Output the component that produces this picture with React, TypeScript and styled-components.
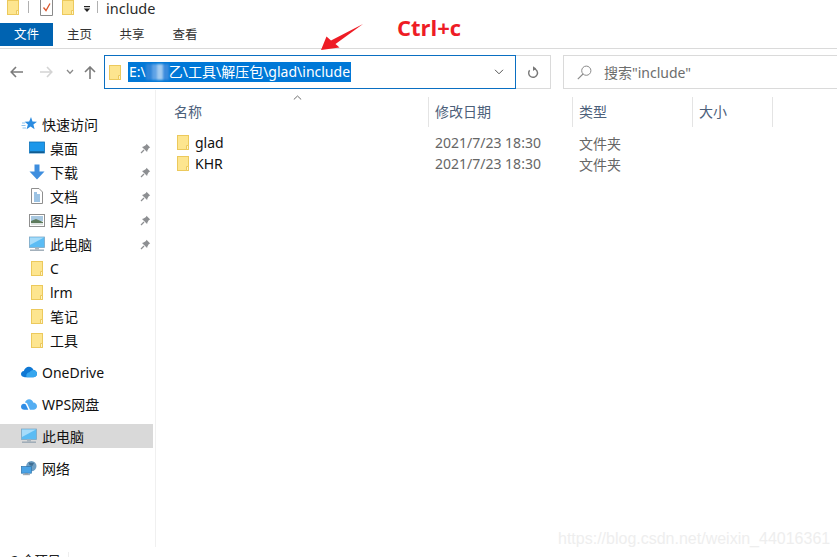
import React from "react";
import styled, { createGlobalStyle } from "styled-components";

const Global = createGlobalStyle`
  html, body { margin: 0; padding: 0; background: #fff; overflow: hidden; }
  #root { width: 837px; height: 557px; }
  * { box-sizing: border-box; }
`;

const FONT = `"Noto Sans", "Noto Sans CJK SC", sans-serif`;

const Window = styled.div`
  position: relative;
  width: 837px;
  height: 557px;
  overflow: hidden;
  background: #fff;
  font-family: ${FONT};
  color: #1a1a1a;
  display: flex;
  flex-direction: column;
`;

const TitleBar = styled.div`
  height: 23px;
  display: flex;
  align-items: flex-start;
  padding-left: 7px;
  flex: none;
`;
const TitleSep = styled.span<{ $ml: number }>`
  width: 1px;
  height: 12px;
  background: #b0b0b0;
  margin: 1px 0 0 ${(p) => p.$ml}px;
  flex: none;
`;
const TitleIcon = styled.span<{ $ml: number }>`
  margin-left: ${(p) => p.$ml}px;
  display: flex;
  flex: none;
`;
const TitleText = styled.span`
  margin: 0 0 0 8px;
  font-size: 14.5px;
  line-height: 16px;
  color: #2a2a2a;
`;

const Tabs = styled.div`
  height: 26px;
  flex: none;
  display: flex;
  align-items: flex-start;
  border-bottom: 1px solid #dadada;
`;
const FileTab = styled.div`
  width: 53px;
  height: 23px;
  background: #0063b1;
  color: #fff;
  font-size: 12.5px;
  line-height: 23px;
  text-align: center;
`;
const Tab = styled.div<{ $w: number }>`
  width: ${(p) => p.$w}px;
  height: 23px;
  font-size: 12.5px;
  line-height: 23px;
  text-align: center;
  color: #333;
`;

const NavRow = styled.div`
  height: 41px;
  flex: none;
  display: flex;
  align-items: flex-start;
  padding-top: 6px;
`;
const NavButtons = styled.div`
  width: 104px;
  height: 34px;
  flex: none;
  display: flex;
  align-items: center;
  padding-left: 10px;
`;
const NavIcon = styled.span<{ $ml?: number }>`
  margin-left: ${(p) => p.$ml ?? 0}px;
  display: flex;
  flex: none;
`;
const AddressBox = styled.div`
  width: 412px;
  height: 34px;
  flex: none;
  border: 1px solid #0a6fc2;
  display: flex;
  align-items: center;
  padding: 0 11px 0 4px;
`;
const Selection = styled.div`
  margin-left: 7px;
  height: 20px;
  width: 223px;
  background: #0078d7;
  color: #fff;
  font-size: 14px;
  line-height: 20px;
  padding-left: 1px;
  white-space: nowrap;
  overflow: hidden;
`;
const Blur = styled.span`
  display: inline-block;
  vertical-align: top;
  margin-top: 2px;
  width: 23px;
  height: 16px;
  background: linear-gradient(90deg, #2f84d8 0 25%, #5fa3e6 25% 50%, #a3cbf0 50% 72%, #3b8bdc 72%);
  filter: blur(1px);
`;
const Spacer = styled.div`
  flex: 1;
`;
const RefreshBox = styled.div`
  width: 35px;
  height: 34px;
  flex: none;
  border: 1px solid #dadada;
  border-left: 0;
  display: flex;
  align-items: center;
  justify-content: center;
`;
const SearchBox = styled.div`
  margin-left: 12px;
  flex: 1;
  height: 34px;
  border: 1px solid #dadada;
  border-right: 0;
  display: flex;
  align-items: center;
  padding-left: 13px;
  font-size: 14px;
  color: #6d6d6d;
  gap: 12px;
`;

const Body = styled.div`
  flex: 1;
  display: flex;
  min-height: 0;
`;
const Sidebar = styled.nav`
  width: 156px;
  flex: none;
  border-right: 1px solid #f0f0f0;
  padding-top: 22px;
  height: 457px;
  display: flex;
  flex-direction: column;
`;
const SideItem = styled.div<{ $active?: boolean; $level?: number; $gap?: number }>`
  height: 24px;
  flex: none;
  width: 153px;
  margin-top: ${(p) => p.$gap ?? 0}px;
  display: flex;
  align-items: center;
  padding-left: ${(p) => (p.$level === 1 ? 29 : 21)}px;
  background: ${(p) => (p.$active ? "#d9d9d9" : "transparent")};
  font-size: 14px;
  color: #111;
`;
const SideIcon = styled.span`
  width: 16px;
  height: 16px;
  display: flex;
  align-items: center;
  justify-content: center;
  flex: none;
`;
const SideLabel = styled.span`
  margin-left: 5px;
  flex: 1;
  white-space: nowrap;
`;
const Pin = styled.span`
  margin-right: 2px;
  display: flex;
  flex: none;
`;

const Main = styled.main`
  flex: 1;
  position: relative;
  padding-top: 7px;
`;
const SortCaret = styled.span`
  position: absolute;
  left: 137px;
  top: 5px;
  display: flex;
`;
const Header = styled.div`
  display: grid;
  grid-template-columns: 273px 144px 120px 80px;
  height: 28px;
  margin-bottom: 7px;
`;
const HeadCell = styled.div<{ $first?: boolean }>`
  padding-left: ${(p) => (p.$first ? 18 : 6)}px;
  border-right: 1px solid #e4e4e4;
  font-size: 14px;
  line-height: 30px;
  color: #4c607a;
`;
const Row = styled.div`
  display: grid;
  grid-template-columns: 272px 145px 120px;
  height: 21px;
  align-items: center;
`;
const NameCell = styled.div`
  display: flex;
  align-items: center;
  padding-left: 21px;
  gap: 6px;
  font-size: 14px;
  color: #111;
`;
const DateCell = styled.div`
  padding-left: 7px;
  font-size: 14px;
  color: #666;
`;
const TypeCell = styled.div`
  padding-left: 6px;
  font-size: 14px;
  color: #666;
`;

const Status = styled.div`
  position: absolute;
  left: 11px;
  top: 552px;
  width: 58px;
  font-size: 13px;
  line-height: 16px;
  color: #222;
  border-right: 1px solid #eeeeee;
`;
const Watermark = styled.div`
  position: absolute;
  left: 558px;
  top: 530px;
  font-family: "Liberation Sans", sans-serif;
  font-size: 16px;
  line-height: 18px;
  color: #eeeeee;
  white-space: nowrap;
`;
const Annotation = styled.div`
  position: absolute;
  left: 397px;
  top: 12px;
  font-family: "Open Sans", "Noto Sans", sans-serif;
  font-weight: 700;
  font-size: 22px;
  line-height: 30px;
  color: #ee1c25;
`;
const Arrow = styled.svg`
  position: absolute;
  left: 320px;
  top: 23px;
`;

const Folder = () => (
  <svg width="12" height="15" viewBox="0 0 12 15">
    <rect x="0.5" y="0.5" width="11" height="14" fill="#fde58f" stroke="#ecc95c" />
    <path d="M9.5 14.5V10.5H11.5V14.5Z" fill="#fff3c4" stroke="#ecc95c" />
  </svg>
);

const PinIcon = () => (
  <svg width="11" height="11" viewBox="0 0 11 11">
    <path d="M6.5.8 10.2 4.5 8.9 5 7.4 7.4 7.1 9 2 3.9 3.6 3.6 6 2.1Z" fill="#8d8f92" />
    <path d="M4 7 1 10" stroke="#8d8f92" strokeWidth="1.2" />
  </svg>
);

const Monitor = () => (
  <svg width="16" height="16" viewBox="0 0 16 16">
    <rect x="0.5" y="1" width="15" height="10.5" fill="#5bbcf4" stroke="#7ea7c4" strokeWidth="0.8" />
    <path d="M1 1.5H15L1 9Z" fill="#a6dcfa" />
    <rect x="6" y="11.5" width="4" height="2" fill="#a8b4bd" />
    <rect x="1" y="13.5" width="14" height="1.4" fill="#9aa8b4" />
  </svg>
);

const Desktop = () => (
  <svg width="16" height="14" viewBox="0 0 16 14">
    <rect x="0.5" y="1" width="15" height="11" fill="#1c97ea" stroke="#0d72b8" strokeWidth="0.8" />
    <rect x="1" y="10.4" width="14" height="1.4" fill="#12517f" />
  </svg>
);

const DownArrow = () => (
  <svg width="16" height="16" viewBox="0 0 16 16">
    <path d="M5.5 0.5H10.5V7.5H15.5L8 15.5.5 7.5H5.5Z" fill="#3e8ede" />
  </svg>
);

const DocIcon = () => (
  <svg width="12" height="16" viewBox="0 0 12 16">
    <path d="M.5.5H8L11.5 4V15.5H.5Z" fill="#fff" stroke="#8f8f8f" />
    <path d="M3 5H6M3 7H9M3 9H9M3 11H9M3 13H9" stroke="#3a87c8" strokeWidth="1" />
  </svg>
);

const PictureIcon = () => (
  <svg width="16" height="13" viewBox="0 0 16 13">
    <rect x="0.5" y="0.5" width="15" height="12" fill="#fff" stroke="#8f8f8f" />
    <rect x="2" y="2" width="12" height="5" fill="#a8c8e0" />
    <path d="M2 7 7 5 14 8V11H2Z" fill="#5d7a5c" />
    <rect x="2" y="9" width="12" height="2" fill="#dde3e0" />
  </svg>
);

const Star = () => (
  <svg width="16" height="14" viewBox="0 0 16 14">
    <path d="M10 0 11.5 4.6 16 4.8 12.4 7.6 13.6 12.2 9.6 9.6 5.6 12.2 6.9 7.6 3.6 4.8 8.2 4.6Z" fill="#2a8be0" />
    <path d="M1 6H4M.5 8.5H4.5M1.5 11H5" stroke="#8cc2ee" strokeWidth="1" />
  </svg>
);

const OneDrive = () => (
  <svg width="17" height="12" viewBox="0 0 17 12">
    <path d="M4 11.5C1.5 11.5 0 10 0 8.2 0 6.5 1.3 5.2 3 5 3.7 2.2 6 .5 8.4.5 10.7.5 12.6 1.9 13.3 4 15.4 4.2 17 5.8 17 7.8 17 10 15.3 11.5 13 11.5Z" fill="#0f78d4" />
    <path d="M6 11.5C5 9 6.5 6.5 9 6.3 10.3 4.6 12 4 13.3 4 15.4 4.2 17 5.8 17 7.8 17 10 15.3 11.5 13 11.5Z" fill="#36a6ee" />
  </svg>
);

const WpsCloud = () => (
  <svg width="17" height="13" viewBox="0 0 17 13">
    <path d="M3.5 12C1.5 12 0 10.6 0 8.8 0 7 1.5 5.6 3.2 5.6 3.8 5.6 4.6 5.9 5 6.3L7.8 12Z" fill="#2f8de6" />
    <path d="M4.2 4.4C4.8 2.2 6.6.8 8.6.8 10.8.8 12.6 2.3 13 4.4 15.3 4.6 17 6.2 17 8.3 17 10.5 15.3 12 13.2 12H9.5L6.5 5.4C5.8 4.8 5 4.5 4.2 4.4Z" fill="#55aef2" />
  </svg>
);

const Network = () => (
  <svg width="17" height="16" viewBox="0 0 17 16">
    <circle cx="11" cy="6" r="5.5" fill="#6f9fc4" />
    <path d="M8 2C10 3 12 2 14 2.5L12 6 9 5Z" fill="#3f6f94" />
    <rect x="0.5" y="6.5" width="10.5" height="7" fill="#4aa3e6" stroke="#2f76ad" strokeWidth="0.8" />
    <rect x="4" y="13.5" width="3.5" height="1.2" fill="#8a97a3" />
    <rect x="2" y="14.6" width="7.5" height="1" fill="#8a97a3" />
  </svg>
);

const quick = [
  { icon: <Desktop />, label: "桌面" },
  { icon: <DownArrow />, label: "下载" },
  { icon: <DocIcon />, label: "文档" },
  { icon: <PictureIcon />, label: "图片" },
  { icon: <Monitor />, label: "此电脑" },
];
const folders = ["C", "lrm", "笔记", "工具"];
const files = ["glad", "KHR"];

export default function App() {
  return (
    <Window>
      <Global />
      <TitleBar>
        <Folder />
        <TitleSep $ml={9} />
        <TitleIcon $ml={11}>
          <svg width="13" height="16" viewBox="0 0 13 16">
            <path d="M.5 0V15.5H12.5V0" fill="#fff" stroke="#8a8a8a" />
            <path d="M3.5 7.5 6 10.5 10 3.5" fill="none" stroke="#d9552b" strokeWidth="1.3" />
          </svg>
        </TitleIcon>
        <TitleIcon $ml={9}>
          <Folder />
        </TitleIcon>
        <TitleIcon $ml={9}>
          <svg width="8" height="14" viewBox="0 0 8 14">
            <rect x="1" y="6" width="6" height="1.2" fill="#222" />
            <path d="M.8 8.5H7.2L4 12Z" fill="#222" />
          </svg>
        </TitleIcon>
        <TitleSep $ml={6} />
        <TitleText>include</TitleText>
      </TitleBar>
      <Tabs>
        <FileTab>文件</FileTab>
        <Tab $w={53}>主页</Tab>
        <Tab $w={52}>共享</Tab>
        <Tab $w={54}>查看</Tab>
      </Tabs>
      <NavRow>
        <NavButtons>
          <NavIcon>
            <svg width="13" height="12" viewBox="0 0 13 12">
              <path d="M6 1 1.2 6 6 11M1.5 6H13" fill="none" stroke="#7b7b7b" strokeWidth="1.6" />
            </svg>
          </NavIcon>
          <NavIcon $ml={17}>
            <svg width="13" height="12" viewBox="0 0 13 12">
              <path d="M7 1 11.8 6 7 11M11.5 6H0" fill="none" stroke="#d4d4d4" strokeWidth="1.6" />
            </svg>
          </NavIcon>
          <NavIcon $ml={13}>
            <svg width="8" height="6" viewBox="0 0 8 6">
              <path d="M1 1 4 4.2 7 1" fill="none" stroke="#8a8a8a" strokeWidth="1.3" />
            </svg>
          </NavIcon>
          <NavIcon $ml={10}>
            <svg width="12" height="13" viewBox="0 0 12 13">
              <path d="M1 6 6 1 11 6M6 1.5V13" fill="none" stroke="#7b7b7b" strokeWidth="1.6" />
            </svg>
          </NavIcon>
        </NavButtons>
        <AddressBox>
          <Folder />
          <Selection>
            E:\<Blur />乙\工具\解压包\glad\include
          </Selection>
          <Spacer />
          <svg width="10" height="6" viewBox="0 0 10 6">
            <path d="M1 .8 5 4.8 9 .8" fill="none" stroke="#555" strokeWidth="1" />
          </svg>
        </AddressBox>
        <RefreshBox>
          <svg width="12" height="13" viewBox="0 0 12 13">
            <path d="M7 2.6A4.4 4.4 0 1 1 2.6 4.2" fill="none" stroke="#777" strokeWidth="1.4" />
            <path d="M6 .2 9.2 2.6 6 5Z" fill="#777" />
          </svg>
        </RefreshBox>
        <SearchBox>
          <svg width="15" height="15" viewBox="0 0 15 15">
            <circle cx="9.3" cy="5.7" r="4.6" fill="none" stroke="#8a8a8a" strokeWidth="1" />
            <path d="M6 9 .8 14.2" stroke="#8a8a8a" strokeWidth="1.1" />
          </svg>
          <span>搜索"include"</span>
        </SearchBox>
      </NavRow>
      <Body>
        <Sidebar>
          <SideItem>
            <SideIcon>
              <Star />
            </SideIcon>
            <SideLabel>快速访问</SideLabel>
          </SideItem>
          {quick.map((q) => (
            <SideItem key={q.label} $level={1}>
              <SideIcon>{q.icon}</SideIcon>
              <SideLabel>{q.label}</SideLabel>
              <Pin>
                <PinIcon />
              </Pin>
            </SideItem>
          ))}
          {folders.map((f) => (
            <SideItem key={f} $level={1}>
              <SideIcon>
                <Folder />
              </SideIcon>
              <SideLabel>{f}</SideLabel>
            </SideItem>
          ))}
          <SideItem $gap={8}>
            <SideIcon>
              <OneDrive />
            </SideIcon>
            <SideLabel>OneDrive</SideLabel>
          </SideItem>
          <SideItem $gap={8}>
            <SideIcon>
              <WpsCloud />
            </SideIcon>
            <SideLabel>WPS网盘</SideLabel>
          </SideItem>
          <SideItem $gap={8} $active>
            <SideIcon>
              <Monitor />
            </SideIcon>
            <SideLabel>此电脑</SideLabel>
          </SideItem>
          <SideItem $gap={8}>
            <SideIcon>
              <Network />
            </SideIcon>
            <SideLabel>网络</SideLabel>
          </SideItem>
        </Sidebar>
        <Main>
          <SortCaret>
            <svg width="9" height="5" viewBox="0 0 9 5">
              <path d="M.8 4.5 4.5 1 8.2 4.5" fill="none" stroke="#6d6d6d" strokeWidth="1" />
            </svg>
          </SortCaret>
          <Header>
            <HeadCell $first>名称</HeadCell>
            <HeadCell>修改日期</HeadCell>
            <HeadCell>类型</HeadCell>
            <HeadCell>大小</HeadCell>
          </Header>
          {files.map((f) => (
            <Row key={f}>
              <NameCell>
                <Folder />
                {f}
              </NameCell>
              <DateCell>2021/7/23 18:30</DateCell>
              <TypeCell>文件夹</TypeCell>
            </Row>
          ))}
        </Main>
      </Body>
      <Status>2 个项目</Status>
      <Annotation>Ctrl+c</Annotation>
      <Arrow width="44" height="28" viewBox="0 0 44 28">
        <path d="M1 27 6.5 13.5 11 17.5 43 1 15.5 21 19.5 24.5Z" fill="#ee1c25" />
      </Arrow>
      <Watermark>https://blog.csdn.net/weixin_44016361</Watermark>
    </Window>
  );
}
